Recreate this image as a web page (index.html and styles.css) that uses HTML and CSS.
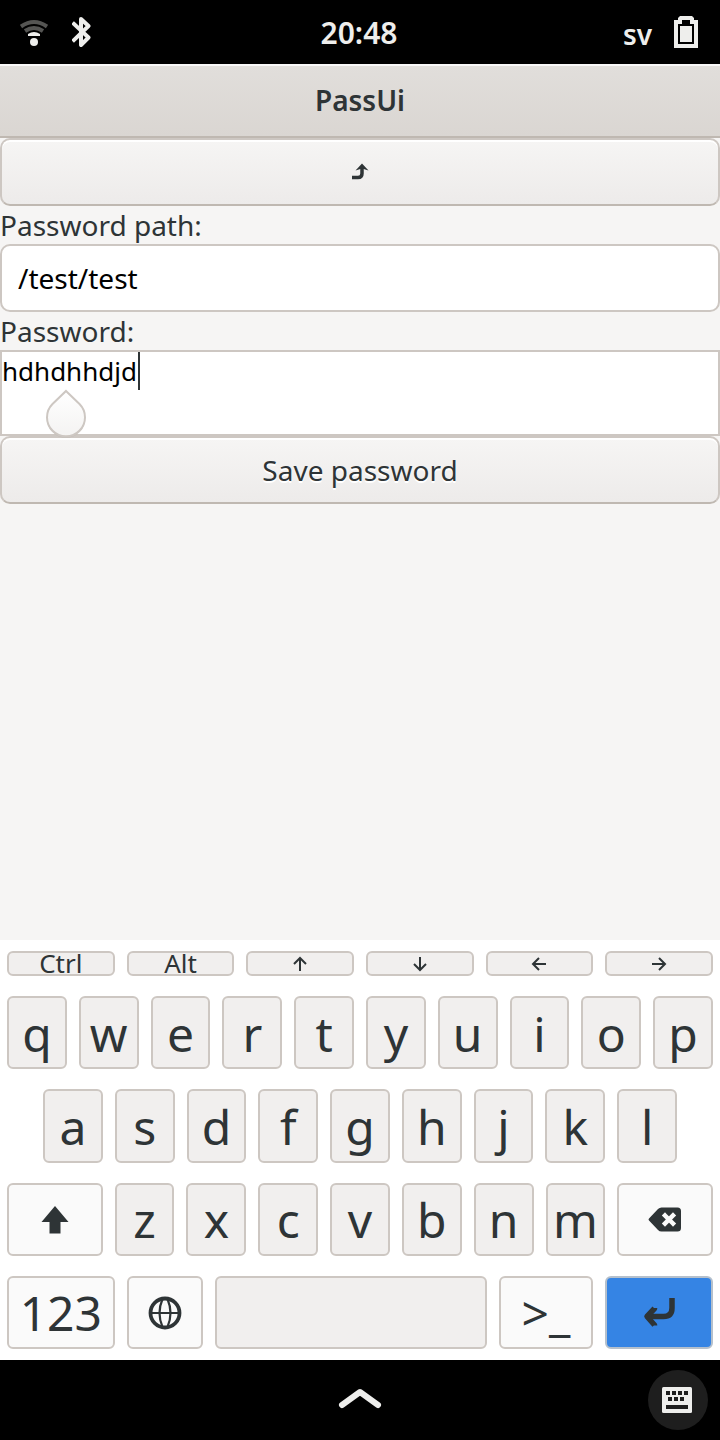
FILE: index.html
```html
<!DOCTYPE html>
<html lang="en">
<head>
<meta charset="utf-8">
<meta name="viewport" content="width=device-width, initial-scale=1">
<title>PassUi</title>
<link rel="stylesheet" href="styles.css">
</head>
<body>
<header class="status">
  <div class="status-group">
    <svg width="28" height="32" viewBox="0 -4 28 32" role="img" aria-label="Wi-Fi">
      <g fill="none" stroke="#555553" stroke-width="4">
        <path d="M1 6.500Q14 -2.500 27 6.500"/>
        <path d="M5 11Q14 5 23 11"/>
      </g>
      <path d="M8 16v-2Q14 10 20 14v2z" fill="#eeeeec"/>
      <circle cx="14" cy="22" r="4" fill="#eeeeec"/>
    </svg>
    <svg width="20" height="32" viewBox="0 0 20 32" role="img" aria-label="Bluetooth">
      <path d="M2 8L16.500 21.500L9 29V3L16.500 10L2 24" fill="none" stroke="#eeeeec" stroke-width="4" stroke-linejoin="round" stroke-linecap="square"/>
    </svg>
  </div>
  <time class="clock">20:48</time>
  <div class="status-group status-right">
    <span class="lang">sv</span>
    <svg width="24" height="32" viewBox="0 0 24 32" role="img" aria-label="Battery full">
      <path fill="#eeeeec" fill-rule="evenodd" d="M0 4h4V2l2-2h12l2 2v2h4v28H0zM8 4v4H4v20h16V8h-4V4z"/>
      <path fill="#eeeeec" d="M6 10h12v16H6z"/>
    </svg>
  </div>
</header>

<main class="app">
  <h1 class="titlebar">PassUi</h1>
  <button class="btn" type="button" aria-label="Up">
    <svg width="18" height="18" viewBox="0 0 18 18">
      <path d="M1 14.500H7Q11 14.500 11 10.500V4" fill="none" stroke="#2e3436" stroke-width="3.500"/>
      <path d="M11 .5L17.500 7.500L11 5.500L4.500 7.500z" fill="#2e3436"/>
    </svg>
  </button>
  <label class="label" for="path">Password path:</label>
  <input class="entry" id="path" type="text" value="/test/test">
  <label class="label" for="password">Password:</label>
  <div class="editor">
    <textarea class="textview" id="password" spellcheck="false">hdhdhhdjd</textarea>
    <span class="caret"></span>
    <svg class="handle" width="44" height="50" viewBox="0 0 44 50" aria-hidden="true">
      <defs><linearGradient id="drop" x1="0" y1="0" x2="0" y2="1"><stop offset="0" stop-color="#ffffff"/><stop offset="1" stop-color="#f4f3f2"/></linearGradient></defs>
      <path d="M22 4L35.500 16.500A19 19 0 1 1 8.500 16.500Z" fill="#bdb8b3" opacity=".6"/>
      <path d="M22 2L35.500 15A19 19 0 1 1 8.500 15Z" fill="url(#drop)" stroke="#cdc7c2" stroke-width="2"/>
    </svg>
  </div>
  <button class="btn" type="button">Save password</button>
</main>

<section class="keyboard" aria-label="Keyboard">
  <div class="row extras">
    <button class="key">Ctrl</button>
    <button class="key">Alt</button>
    <button class="key" aria-label="Arrow up"><svg width="16" height="16" viewBox="0 0 16 16"><path class="arrow" d="M8 15V2M2 8L8 2L14 8"/></svg></button>
    <button class="key" aria-label="Arrow down"><svg width="16" height="16" viewBox="0 0 16 16"><path class="arrow" d="M8 1V14M2 8L8 14L14 8"/></svg></button>
    <button class="key" aria-label="Arrow left"><svg width="16" height="16" viewBox="0 0 16 16"><path class="arrow" d="M15 8H2M8 2L2 8L8 14"/></svg></button>
    <button class="key" aria-label="Arrow right"><svg width="16" height="16" viewBox="0 0 16 16"><path class="arrow" d="M1 8H14M8 2L14 8L8 14"/></svg></button>
  </div>
  <div class="row">
    <button class="key">q</button><button class="key">w</button><button class="key">e</button><button class="key">r</button><button class="key">t</button><button class="key">y</button><button class="key">u</button><button class="key">i</button><button class="key">o</button><button class="key">p</button>
  </div>
  <div class="row inset">
    <button class="key">a</button><button class="key">s</button><button class="key">d</button><button class="key">f</button><button class="key">g</button><button class="key">h</button><button class="key">j</button><button class="key">k</button><button class="key">l</button>
  </div>
  <div class="row letters">
    <button class="key alt" aria-label="Shift"><svg width="28" height="28" viewBox="0 0 28 28"><path d="M14 0L27.500 16H19.500V27.500H8.500V16H.5z" fill="#2e3436"/></svg></button>
    <button class="key">z</button><button class="key">x</button><button class="key">c</button><button class="key">v</button><button class="key">b</button><button class="key">n</button><button class="key">m</button>
    <button class="key alt" aria-label="Backspace"><svg width="34" height="26" viewBox="0 0 34 26"><path d="M1 11.500L10 2Q11.500 .5 13.500 .5H29.500Q33 .5 33 4V21Q33 24.500 29.500 24.500H13.500Q11.500 24.500 10 23L1 13.500Q0 12.500 1 11.500z" fill="#2e3436"/><path d="M17 8.500L25 16.500M25 8.500L17 16.500" stroke="#fafafa" stroke-width="4.500" stroke-linecap="square"/></svg></button>
  </div>
  <div class="row bottom">
    <button class="key alt">123</button>
    <button class="key alt" aria-label="Switch layout"><svg width="34" height="34" viewBox="0 0 34 34" fill="none" stroke="#2e3436"><circle cx="17" cy="17" r="14.500" stroke-width="3.800"/><path d="M2 17H32" stroke-width="2"/><path d="M14.500 3Q8.500 17 14.500 31M19.500 3Q25.500 17 19.500 31" stroke-width="2.200"/></svg></button>
    <button class="key" aria-label="Space"></button>
    <button class="key alt">&gt;_</button>
    <button class="key enter" aria-label="Enter"><svg width="34" height="32" viewBox="0 0 34 32"><path d="M30 1V11Q30 19.500 21.500 19.500H6" fill="none" stroke="#2e3436" stroke-width="5.500"/><path d="M12.500 11V11.500L5 19.500L12.500 28V28.500" fill="none" stroke="#2e3436" stroke-width="5.500" stroke-linejoin="round"/></svg></button>
  </div>
</section>

<nav class="home">
  <button class="home-btn home-up" aria-label="Overview"><svg width="44" height="26" viewBox="0 0 44 26"><path d="M4 18L22 5L40 18" fill="none" stroke="#eeeeec" stroke-width="6" stroke-linecap="round" stroke-linejoin="round"/></svg></button>
  <button class="home-btn home-kbd" aria-label="Hide keyboard"><svg width="32" height="26" viewBox="0 0 32 26"><rect width="30" height="26" rx="1.500" fill="#eeeeec"/><path fill="#1e1e1e" d="M4 4h4v4H4zM10 4h4v4h-4zM16 4h4v4h-4zM22 4h4v4h-4zM6 10h4v4H6zM12 10h4v4h-4zM18 10h4v4h-4zM4 18h22v4H4z"/></svg></button>
</nav>
</body>
</html>
```
FILE: styles.css
```css
* {
  box-sizing: border-box;
}

body {
  margin: 0;
  min-height: 100vh;
  display: flex;
  flex-direction: column;
  background: #000;
  color: #2e3436;
  font-family: "Noto Sans", "Open Sans", sans-serif;
  font-size: 28px;
}

button,
input,
textarea {
  font: inherit;
  margin: 0;
}

svg {
  display: block;
  flex: none;
}

.status {
  display: grid;
  grid-template-columns: 1fr auto 1fr;
  align-items: center;
  height: 64px;
  padding: 0 22px 0 20px;
  background: #000;
  color: #eeeeec;
  font-weight: 600;
}

.status-group {
  display: flex;
  align-items: center;
  gap: 22px;
}

.status-group:first-child {
  gap: 24px;
}

.status-right {
  justify-content: flex-end;
}

.clock {
  padding-top: 2px;
  font-size: 30px;
  line-height: 40px;
}

.lang {
  padding-top: 4px;
  font-size: 28px;
  line-height: 40px;
}

.app {
  flex: 1;
  display: flex;
  flex-direction: column;
  background: #f6f5f4;
}

.titlebar {
  height: 74px;
  margin: 0;
  border-top: 2px solid #f9f8f8;
  border-bottom: 2px solid #bfb8b1;
  background: linear-gradient(#e1dedb, #dad6d2);
  font-size: 28px;
  font-weight: 600;
  line-height: 68px;
  text-align: center;
}

.btn {
  display: flex;
  align-items: center;
  justify-content: center;
  height: 68px;
  padding: 0;
  border: 2px solid #cdc7c2;
  border-bottom-color: #bfb8b1;
  border-radius: 10px;
  background: linear-gradient(#f6f5f4, #edebea);
  box-shadow: inset 0 2px #fff;
  color: #2e3436;
  text-shadow: 0 2px #fff;
}

.label {
  height: 38px;
  line-height: 38px;
}

.entry {
  width: 100%;
  height: 68px;
  padding: 0 16px;
  border: 2px solid #cdc7c2;
  border-radius: 10px;
  background: #fff;
  color: #000;
}

.editor {
  position: relative;
  z-index: 1;
  height: 86px;
}

.textview {
  display: block;
  width: 100%;
  height: 100%;
  padding: 0;
  border: 2px solid #cdc7c2;
  border-radius: 0;
  background: #fff;
  color: #000;
  font-size: 26px;
  line-height: 38px;
  resize: none;
  overflow: hidden;
}

.caret {
  position: absolute;
  left: 138px;
  top: 2px;
  width: 2px;
  height: 38px;
  background: #2e3436;
}

.handle {
  position: absolute;
  left: 44px;
  top: 39px;
}

.keyboard {
  display: grid;
  grid-template-rows: 25px repeat(4, 1fr);
  gap: 20px;
  min-height: 420px;
  padding: 11px 7px;
  background: #fff;
}

.row {
  display: grid;
  grid-auto-flow: column;
  grid-auto-columns: minmax(0, 1fr);
  gap: 12px;
}

.inset {
  padding: 0 36px;
}

.letters {
  grid-template-columns: minmax(0, 96fr) repeat(7, minmax(0, 60fr)) minmax(0, 96fr);
}

.bottom {
  grid-template-columns: 108fr 77fr 272fr 95fr 108fr;
}

.key {
  display: flex;
  align-items: center;
  justify-content: center;
  min-width: 0;
  padding: 2px 0 0;
  border: 2px solid #cdc7c2;
  border-radius: 6px;
  background: #f1efee;
  color: #2e3436;
  font-size: 48px;
  line-height: 66px;
}

.extras .key {
  padding: 0;
  font-size: 26px;
  line-height: 21px;
}

.key.alt {
  background: #fafafa;
}

.key.enter {
  border-color: #b5c0cc;
  background: #3584e4;
}

.arrow {
  fill: none;
  stroke: #2e3436;
  stroke-width: 2;
}

.home {
  display: grid;
  grid-template-columns: 1fr auto 1fr;
  align-items: center;
  height: 80px;
  padding: 0 12px;
}

.home-btn {
  display: flex;
  align-items: center;
  justify-content: center;
  padding: 0;
  border: 0;
  background: none;
}

.home-up {
  grid-column: 2;
}

.home-kbd {
  justify-self: end;
  width: 60px;
  height: 60px;
  border-radius: 50%;
  background: #1e1e1e;
}
```
